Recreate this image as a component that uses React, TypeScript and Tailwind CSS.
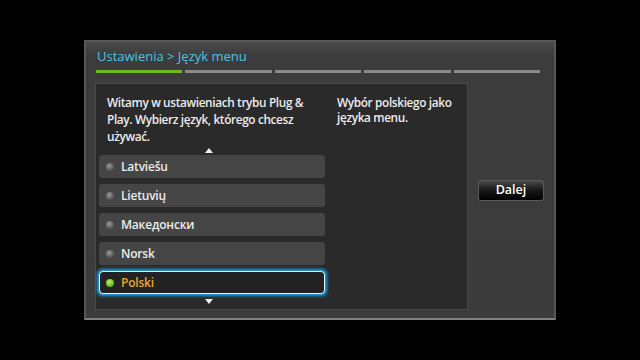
import React from "react";

const langs = ["Latviešu", "Lietuvių", "Македонски", "Norsk"];

function Dot({ active }: { active?: boolean }) {
  return (
    <span
      className={
        active
          ? "w-[8px] h-[8px] rounded-full bg-[radial-gradient(circle_at_40%_35%,#b6f05a,#6cbf1c_60%,#4a8a10)]"
          : "w-[8px] h-[8px] rounded-full bg-[radial-gradient(circle_at_40%_35%,#9a9a9a,#5c5c5c_60%,#3a3a3a)]"
      }
    />
  );
}

function Tri({ up }: { up?: boolean }) {
  return (
    <svg width="8" height="5" viewBox="0 0 8 5">
      {up ? <polygon points="4,0 8,5 0,5" fill="#f0f0f0" /> : <polygon points="0,0 8,0 4,5" fill="#f0f0f0" />}
    </svg>
  );
}

export default function App() {
  return (
    <div
      className="w-[640px] h-[360px] bg-black pt-[40px] pl-[84px]"
      style={{ fontFamily: '"Open Sans", "Noto Sans", sans-serif' }}
    >
      <div className="w-[472px] h-[280px] border-2 border-[#575757] border-b-[#808080] bg-[linear-gradient(#4a4a4a,#3c3c3c_14px,#3b3b3b)] flex flex-col">
        <div className="pl-[11px] pt-[6px] text-[13px] leading-[16px] text-[#4cc3e4]">
          Ustawienia &gt; Język menu
        </div>
        <div className="ml-[10px] mt-[6px] w-[444px] h-[3px] flex gap-[3px]">
          <div className="flex-1 bg-[#6cb61e]" />
          <div className="flex-1 bg-[#8a8a8a]" />
          <div className="flex-1 bg-[#8a8a8a]" />
          <div className="flex-1 bg-[#8a8a8a]" />
          <div className="flex-1 bg-[#8a8a8a]" />
        </div>
        <div className="flex mt-[10px]">
          <div className="ml-[9px] w-[373px] h-[227px] border border-[#4a4a4a] bg-[#2a2a2a] flex">
            <div className="w-[241px] flex flex-col">
              <div className="pl-[11px] pt-[10px] whitespace-nowrap text-[11.8px] tracking-[-0.35px] leading-[17px] font-semibold text-[#ececec]">
                Witamy w ustawieniach trybu Plug &amp;
                <br />
                Play. Wybierz język, którego chcesz
                <br />
                używać.
              </div>
              <div className="flex pl-[109px] h-[10px] items-center">
                <Tri up />
              </div>
              <div className="pl-[3px] w-[229px] flex flex-col gap-[6px]">
                {langs.map((l) => (
                  <div
                    key={l}
                    className="h-[23px] rounded-[3px] bg-[#454545] flex items-center pl-[7px] gap-[7px] text-[12px] tracking-[-0.2px] font-semibold text-[#ececec]"
                  >
                    <Dot />
                    <span>{l}</span>
                  </div>
                ))}
                <div className="h-[23px] rounded-[4px] bg-[#222222] border-[1.5px] border-[#dff6ff] shadow-[0_0_3px_1.5px_#1f9fe0] flex items-center pl-[6px] gap-[7px] text-[12px] tracking-[-0.2px] font-semibold text-[#eaa832]">
                  <Dot active />
                  <span>Polski</span>
                </div>
              </div>
              <div className="flex pl-[109px] mt-[4px] h-[6px] items-center">
                <Tri />
              </div>
            </div>
            <div className="pt-[11px] whitespace-nowrap text-[11.8px] tracking-[-0.35px] leading-[15px] font-semibold text-[#ececec]">
              Wybór polskiego jako
              <br />
              języka menu.
            </div>
          </div>
          <div className="flex-1 flex justify-center">
            <div className="mt-[97px] w-[66px] h-[21px] rounded-[3px] border border-[#5a5a5a] bg-[linear-gradient(#4a4a4a,#1a1a1a_45%,#000)] flex items-center justify-center text-[12.5px] font-semibold text-white">
              Dalej
            </div>
          </div>
        </div>
      </div>
    </div>
  );
}
